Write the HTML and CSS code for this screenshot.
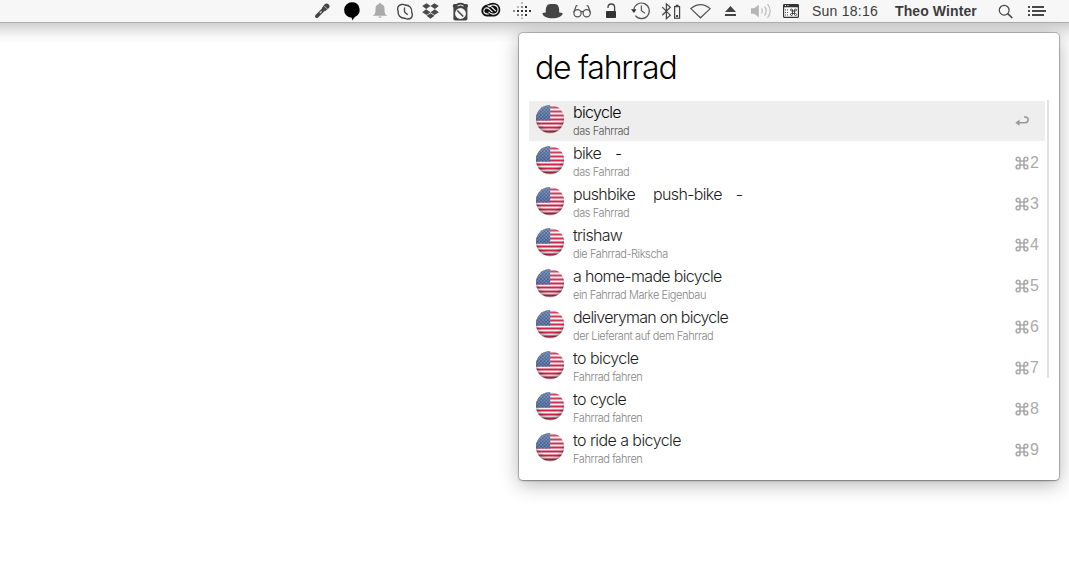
FILE: index.html
```
<!DOCTYPE html>
<html lang="en">
<head>
<meta charset="utf-8">
<title>Dictionary</title>
<link rel="stylesheet" href="styles.css">
</head>
<body>
<svg class="defs" width="0" height="0">
  <defs>
    <clipPath id="disc"><circle cx="15" cy="15" r="14"/></clipPath>
    <radialGradient id="shade" cx=".5" cy=".4" r=".62"><stop offset=".65" stop-color="#000" stop-opacity="0"/><stop offset="1" stop-color="#222" stop-opacity=".5"/></radialGradient>
    <linearGradient id="gloss" x1="0" y1="0" x2="0" y2="1"><stop offset="0" stop-color="#fff" stop-opacity=".2"/><stop offset=".6" stop-color="#fff" stop-opacity="0"/></linearGradient>
    <pattern id="stars" width="3.4" height="3.4" patternUnits="userSpaceOnUse"><rect width="3.4" height="3.4" fill="#35558a"/><circle cx=".9" cy=".9" r=".65" fill="#b9c6da"/><circle cx="2.6" cy="2.6" r=".65" fill="#b9c6da"/></pattern>
    <symbol id="flag" viewBox="0 0 30 32">
      <circle cx="15" cy="15.800" r="13.700" fill="#000" opacity=".25"/>
      <g clip-path="url(#disc)">
        <rect width="30" height="30" fill="#f4f1f1"/>
        <path d="M0 3.500h30M0 7.500h30M0 11.500h30M0 15.500h30M0 19.500h30M0 23.500h30M0 27.500h30" stroke="#cc2348" stroke-width="2.100"/>
        <rect width="15.200" height="16.500" fill="url(#stars)"/>
        <rect width="30" height="30" fill="url(#shade)"/>
        <rect width="30" height="30" fill="url(#gloss)"/>
      </g>
    </symbol>
    <symbol id="cmd" viewBox="0 0 14 14"><path d="M5 5H3.100A1.900 1.900 0 1 1 5 3.100V10.900A1.900 1.900 0 1 1 3.100 9H10.900A1.900 1.900 0 1 1 9 10.900V3.100A1.900 1.900 0 1 1 10.900 5Z" fill="none" stroke="currentColor" stroke-width="1.600"/></symbol>
  </defs>
</svg>
<header class="menubar">
  <svg class="icon" width="28" height="22" viewBox="310 0 28 22"><path d="M316.800 16.200l6-6" stroke="#444" stroke-width="3.600" stroke-linecap="round"/><path d="M321.700 8.200L324.500 4.500q2-1.800 4-.2 2 2 .2 4L325 11.300z" fill="#444"/><path d="M324.300 6l3.500 3.500" stroke="#ddd" stroke-width=".8"/><path d="M319.800 13.200l1.800-1.800" stroke="#ddd" stroke-width="1.200"/></svg>
  <svg class="icon" width="30" height="22" viewBox="338 0 30 22"><path d="M352 2.300a7.600 7.600 0 0 1 3.200 14.500q-1.600 1-2.700 3.700l-.9-2.800A7.700 7.700 0 0 1 352 2.300z" fill="#000"/></svg>
  <svg class="icon" width="26" height="22" viewBox="368 0 26 22"><path d="M373.200 15.800v-.6q2.300-1 2.300-4V8.500q0-3.300 3.200-4.200a1.300 1.300 0 0 1 2.600 0q3.200.9 3.200 4.200v2.700q0 3 2.300 4v.6zM378 16.500h4l-1.200 1.300h-1.600z" fill="#aaa"/></svg>
  <svg class="icon" width="24" height="22" viewBox="394 0 24 22"><path d="M401.500 4.500q2.500-.3 3.500.5c4.500 0 7.300 3.300 6.700 7.300 1.500 2.200.7 6.700-3.700 6.700q-2 0-3-.8c-4.500.2-7.500-3.200-6.900-7.200-1.300-2.500-.2-5.900 3.400-6.500z" fill="none" stroke="#444" stroke-width="1.400"/><path d="M404.500 7.500v4.500l3.200 2.700" fill="none" stroke="#444" stroke-width="1.300"/></svg>
  <svg class="icon" width="28" height="22" viewBox="418 0 28 22"><path d="M426.600 3.300l3.900 2.700-4.400 3-3.900-2.900zM434.400 3.300l4.400 2.800-3.900 2.900-4.400-3zM426.100 9.300l4.400 2.900-3.900 2.800-4.400-2.800zM434.900 9.300l3.900 2.900-4.400 2.800-3.900-2.800zM426.500 15.700l4-2.500 4 2.500-4 3z" fill="#4a4a4a"/></svg>
  <svg class="icon" width="30" height="22" viewBox="446 0 30 22"><path d="M454.500 4h2q1.500-1.300 4-1.300t4 1.300h2q1.500 0 1.500 1.700t-.6 1.800v9.500q.6 3.500-2.200 3.500h-9.600q-2.800 0-2.200-3.500V7.500q-.6-.1-.6-1.800t1.700-1.700z" fill="#444"/><circle cx="460.500" cy="13.500" r="5.400" fill="#f7f7f7"/><path d="M457.300 10.500l6 6" stroke="#444" stroke-width="1.500"/><path d="M457.500 6q3-2 6 0" stroke="#eee" fill="none"/></svg>
  <svg class="icon" width="32" height="22" viewBox="476 0 32 22"><path d="M487.300 4.400Q493.500 1.200 498 4.500c4 3.500 2.800 10.500-3.300 12H486.500c-7-1.200-6.900-11 .8-12.100z" fill="#111"/><path d="M492.500 12.200l-3.800-3.500c-2.700-2.100-5.500.3-4.800 3.100.7 2.300 3 2.300 5 2.200M487.500 5.700q2.700-.2 4.500 1.800l3.800 3.700M488.500 7.200c2.800-3.500 9.200-2.700 9.600 2.200.1 3.500-2.900 5.100-5.600 4.700q-2-.3-4-2.200" fill="none" stroke="#f7f7f7" stroke-width="1.100"/></svg>
  <svg class="icon" width="28" height="22" viewBox="508 0 28 22"><g fill="#333"><path d="M517 10h2v2h-2zM521 10h2v2h-2zM525 10h2v2h-2zM525 14h2v2h-2zM525 6h2v2h-2zM529 10h2v2h-2z"/><path d="M521 6h2v2h-2zM521 14h2v2h-2zM517 14h2v2h-2zM513 10h2v2h-2z" opacity=".55"/><path d="M521 2h2v2h-2zM517 6h2v2h-2zM521 17.500h2v1.500h-2z" opacity=".3"/></g></svg>
  <svg class="icon" width="32" height="22" viewBox="536 0 32 22"><path d="M542.300 13.500q.9-.8 3.500-1c-.3-5.500 1.200-8.500 4.700-8.500h4.200c3.500 0 4.700 3 4.500 8.500q2.700.2 3.600 1c-.8 3-4.800 4.800-10.300 4.800s-9.500-1.800-10.200-4.800z" fill="#444"/></svg>
  <svg class="icon" width="30" height="22" viewBox="568 0 30 22"><g fill="none" stroke="#555" stroke-width="1.200"><circle cx="577.500" cy="13.200" r="3.600"/><circle cx="586.700" cy="13.200" r="3.600"/><path d="M581 12q1-1 2.200 0M573.800 12.500l2.200-6.300q.5-.8 1.500-.2M590.400 12.500L588.200 6.200q-.5-.8-1.500-.2"/></g></svg>
  <svg class="icon" width="26" height="22" viewBox="598 0 26 22"><rect x="606" y="11" width="10" height="7" rx=".8" fill="#333"/><path d="M608 8V7.300a3.300 3.300 0 0 1 6.600 0V11" fill="none" stroke="#444" stroke-width="1.300"/></svg>
  <svg class="icon" width="32" height="22" viewBox="624 0 32 22"><path d="M633.800 9.700a7.800 7.800 0 1 1 1.600 6M641.400 5.500v5.300l3.500 2.500" fill="none" stroke="#555" stroke-width="1.200"/><path d="M631 9.300h5.500l-2.500 3.700z" fill="#333"/></svg>
  <svg class="icon" width="30" height="22" viewBox="656 0 30 22"><path d="M662.300 7.200l8 8-3.900 3.500V3.800l3.900 3.500-8 7.900" fill="none" stroke="#444" stroke-width="1.200"/><rect x="674.600" y="6.600" width="5" height="11.600" fill="none" stroke="#444" stroke-width="1.200"/><path d="M675.700 4.800h2.800v1.500h-2.800zM676.100 15h2v2h-2z" fill="#444"/></svg>
  <svg class="icon" width="32" height="22" viewBox="686 0 32 22"><path d="M690.800 8.600q9.700-8 19.400 0l-9.700 9.200z" fill="none" stroke="#555" stroke-width="1.200"/></svg>
  <svg class="icon" width="26" height="22" viewBox="718 0 26 22"><path d="M730.500 6l5.500 6h-11zM725 14h11v2h-11z" fill="#444"/></svg>
  <svg class="icon" width="34" height="22" viewBox="744 0 34 22"><path d="M751 8.300h3.200l4.600-3.600v12.600l-4.600-3.600H751z" fill="#b5b5b5"/><path d="M761.500 8.500q1.500 2.500 0 5M764.500 6.300q3.400 4.700 0 9.400M767.500 4q5.300 7 0 14" fill="none" stroke="#bbb" stroke-width="1.200"/></svg>
  <svg class="icon" width="34" height="22" viewBox="778 0 34 22"><rect x="783.600" y="4.600" width="14.800" height="12.800" rx="1" fill="#fff" stroke="#333" stroke-width="1.200"/><path d="M783.500 4.300h15v3h-15z" fill="#333"/><path d="M785 5.500h1M787.500 5.500h1" stroke="#fff"/><g fill="none" stroke="#444"><path d="M785 10h1M787 10h1M785 12.500h1M787 12.500h1M785 15h1M787 15h1"/><path d="M792.500 11h-1a1 1 0 1 1 1-1v4.500a1 1 0 1 1-1-1h4a1 1 0 1 1-1 1V10a1 1 0 1 1 1 1z"/></g></svg>
  <span class="clock">Sun 18:16</span>
  <span class="user">Theo Winter</span>
  <svg class="icon" width="32" height="22" viewBox="990 0 32 22"><circle cx="1004.200" cy="10.200" r="4.900" fill="none" stroke="#444" stroke-width="1.200"/><path d="M1007.700 13.700l4.600 4.300" stroke="#444" stroke-width="1.600"/></svg>
  <svg class="icon" width="30" height="22" viewBox="1022 0 30 22"><path d="M1028 6h2v2h-2zM1028 10h2v2h-2zM1028 14h2v2h-2zM1032 6h12v2h-12zM1032 10h14v2h-14zM1032 14h12v2h-12z" fill="#484848"/></svg>
</header>
<main class="panel">
  <h1 class="query">de fahrrad</h1>
  <div class="body">
    <ul class="results">
      <li class="row selected"><svg class="flag"><use href="#flag"/></svg><div class="text"><div class="word">bicycle</div><div class="source">das Fahrrad</div></div><svg class="enter" width="14" height="11" viewBox="0 0 14 11"><path d="M9 1h1.300a2.700 2.700 0 0 1 0 5.700H2" fill="none" stroke="#999" stroke-width="1.500"/><path d="M4.500 3.500v6.400L.3 6.700z" fill="#999"/></svg></li>
      <li class="row"><svg class="flag"><use href="#flag"/></svg><div class="text"><div class="word"><span>bike</span><span class="dash">-</span></div><div class="source">das Fahrrad</div></div><div class="key"><svg class="cmd"><use href="#cmd"/></svg>2</div></li>
      <li class="row"><svg class="flag"><use href="#flag"/></svg><div class="text"><div class="word"><span>pushbike</span><span class="variant">push-bike</span><span class="dash">-</span></div><div class="source">das Fahrrad</div></div><div class="key"><svg class="cmd"><use href="#cmd"/></svg>3</div></li>
      <li class="row"><svg class="flag"><use href="#flag"/></svg><div class="text"><div class="word">trishaw</div><div class="source">die Fahrrad-Rikscha</div></div><div class="key"><svg class="cmd"><use href="#cmd"/></svg>4</div></li>
      <li class="row"><svg class="flag"><use href="#flag"/></svg><div class="text"><div class="word">a home-made bicycle</div><div class="source">ein Fahrrad Marke Eigenbau</div></div><div class="key"><svg class="cmd"><use href="#cmd"/></svg>5</div></li>
      <li class="row"><svg class="flag"><use href="#flag"/></svg><div class="text"><div class="word tight">deliveryman on bicycle</div><div class="source">der Lieferant auf dem Fahrrad</div></div><div class="key"><svg class="cmd"><use href="#cmd"/></svg>6</div></li>
      <li class="row"><svg class="flag"><use href="#flag"/></svg><div class="text"><div class="word loose">to bicycle</div><div class="source">Fahrrad fahren</div></div><div class="key"><svg class="cmd"><use href="#cmd"/></svg>7</div></li>
      <li class="row"><svg class="flag"><use href="#flag"/></svg><div class="text"><div class="word loose">to cycle</div><div class="source">Fahrrad fahren</div></div><div class="key"><svg class="cmd"><use href="#cmd"/></svg>8</div></li>
      <li class="row"><svg class="flag"><use href="#flag"/></svg><div class="text"><div class="word loose">to ride a bicycle</div><div class="source">Fahrrad fahren</div></div><div class="key"><svg class="cmd"><use href="#cmd"/></svg>9</div></li>
    </ul>
    <div class="scrollbar"></div>
  </div>
</main>
</body>
</html>
```
FILE: styles.css
```
* { box-sizing: border-box; }
body {
  margin: 0;
  height: 582px;
  overflow: hidden;
  background: linear-gradient(#d0d0d0, #e6e6e6 7px, #f7f7f7 14px, #fff 20px) 0 23px / 100% 20px no-repeat #fff;
  font-family: Inter, "Liberation Sans", sans-serif;
}
.defs { position: absolute; }
.menubar {
  display: flex;
  height: 23px;
  padding-left: 310px;
  background: #f7f7f7;
  border-bottom: 1px solid #b0b0b0;
  color: #3c3c3c;
  font: 14px/22px "Liberation Sans", Arial, sans-serif;
  white-space: nowrap;
}
.icon { display: block; flex: none; }
.clock { flex: none; width: 83px; letter-spacing: .25px; }
.user { flex: none; width: 95px; font-weight: bold; letter-spacing: .1px; }
.panel {
  width: 540px;
  height: 447px;
  margin: 10px 0 0 519px;
  background: #fff;
  border-radius: 4px;
  box-shadow: 0 0 0 1px rgba(0, 0, 0, .2), 0 1px 2px rgba(0, 0, 0, .25), 0 4px 20px rgba(0, 0, 0, .3);
}
.query {
  height: 68px;
  margin: 0;
  padding: 15px 0 0 16px;
  font-size: 32px;
  line-height: 40px;
  font-weight: 300;
  letter-spacing: -1.25px;
  color: #000;
}
.body { display: flex; padding-left: 10px; }
.results {
  width: 516px;
  margin: 0;
  padding: 0;
  list-style: none;
}
.row {
  display: flex;
  height: 40px;
  margin-bottom: 1px;
  padding: 0 6px;
  color: #1c1c1c;
}
.selected { background: #eee; color: #000; }
.flag { flex: none; width: 30px; height: 32px; margin-top: 3px; }
.text { flex: 1; padding-left: 8px; }
.word {
  display: flex;
  font-size: 16px;
  font-weight: 300;
  line-height: 22px;
  letter-spacing: -.67px;
  white-space: pre;
}
.word.tight { letter-spacing: -.76px; }
.word.loose { letter-spacing: -.56px; }
.dash { margin-left: 14px; }
.variant { margin-left: 18px; }
.source {
  margin-top: 1px;
  font-size: 11px;
  font-weight: 300;
  line-height: 14px;
  letter-spacing: -.42px;
  color: #858585;
}
.selected .source { color: #555; }
.key {
  display: flex;
  align-items: center;
  height: 41px;
  color: #aaa;
  font: 300 16px/40px "Liberation Sans", Arial, sans-serif;
}
.cmd { width: 14px; height: 14px; margin-right: 1px; }
.enter { margin: 15px 10px 0 0; }
.scrollbar {
  width: 2px;
  height: 278px;
  margin: -1px 0 0 2px;
  background: #e2e2e2;
}
```
